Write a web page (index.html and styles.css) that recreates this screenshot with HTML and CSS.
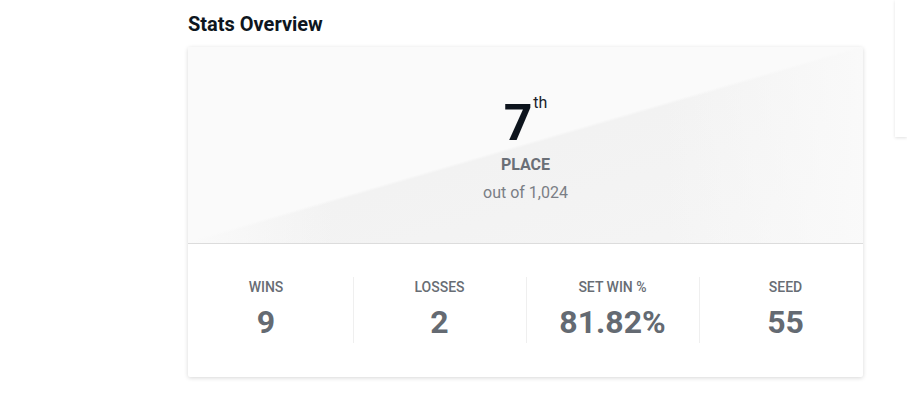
FILE: index.html
```html
<!DOCTYPE html>
<html lang="en">
<head>
<meta charset="utf-8">
<title>Stats Overview</title>
<link rel="stylesheet" href="styles.css">
</head>
<body>
<div class="page">
  <main class="main">
    <h2 class="title">Stats Overview</h2>
    <section class="card">
      <div class="hero">
        <div class="rank"><span class="rank-num">7</span><span class="rank-suffix">th</span></div>
        <div class="rank-label">PLACE</div>
        <div class="rank-total">out of 1,024</div>
      </div>
      <div class="stats">
        <div class="stat">
          <div class="stat-label">WINS</div>
          <div class="stat-value">9</div>
        </div>
        <div class="stat">
          <div class="stat-label">LOSSES</div>
          <div class="stat-value">2</div>
        </div>
        <div class="stat">
          <div class="stat-label">SET WIN %</div>
          <div class="stat-value">81.82%</div>
        </div>
        <div class="stat">
          <div class="stat-label">SEED</div>
          <div class="stat-value">55</div>
        </div>
      </div>
    </section>
  </main>
  <aside class="side">
    <div class="side-card"></div>
  </aside>
</div>
</body>
</html>
```
FILE: styles.css
```css
html, body {
  margin: 0;
  padding: 0;
  background: #ffffff;
}
body {
  font-family: Roboto, "Liberation Sans", Arial, sans-serif;
  overflow: hidden;
}
.page {
  display: flex;
  align-items: flex-start;
  gap: 32px;
  padding-left: 188px;
  width: 907px;
  box-sizing: border-box;
}
.main {
  flex: 0 0 675px;
  padding-top: 12px;
  padding-bottom: 12px;
}
.title {
  margin: 0 0 11px;
  font-size: 20px;
  line-height: 24px;
  font-weight: 700;
  color: #0e1620;
}
.card {
  background: #ffffff;
  border-radius: 2px;
  box-shadow: 0 1px 4px rgba(0, 0, 0, 0.16);
  overflow: hidden;
}
.hero {
  display: flex;
  flex-direction: column;
  align-items: center;
  padding: 51px 0 40px;
  border-bottom: 1px solid #dcdcdc;
  background:
    linear-gradient(to right, rgba(250,250,250,1) 0%, rgba(250,250,250,0) 22%, rgba(250,250,250,0) 70%, rgba(250,250,250,0.9) 100%),
    linear-gradient(to bottom right, #fafafa 0%, #fafafa 49.5%, #f2f2f2 50.3%, #f5f5f5 100%);
}
.rank {
  display: flex;
  align-items: flex-start;
  font-size: 50px;
  line-height: 50px;
  color: #0d141d;
}
.rank-num {
  font-weight: 700;
}
.rank-suffix {
  font-size: 16px;
  line-height: 10px;
  font-weight: 400;
  margin-left: 1px;
  color: #1b222b;
}
.rank-label {
  margin-top: 7px;
  font-size: 16px;
  line-height: 20px;
  font-weight: 700;
  color: #6a6f77;
}
.rank-total {
  margin-top: 8px;
  font-size: 16px;
  line-height: 20px;
  color: #7a7e85;
}
.stats {
  display: grid;
  grid-template-columns: repeat(4, 1fr);
  margin: 0 -8.5px;
  padding: 33px 0 34px;
}
.stat {
  display: flex;
  flex-direction: column;
  align-items: center;
  padding: 2px 0;
}
.stat + .stat {
  border-left: 1px solid #efefef;
}
.stat-label {
  font-size: 14px;
  line-height: 16px;
  font-weight: 500;
  color: #686d74;
}
.stat-value {
  margin-top: 8px;
  font-size: 32px;
  line-height: 38px;
  font-weight: 700;
  color: #646a72;
}
.side {
  flex: 1 1 auto;
  min-width: 0;
}
.side-card {
  height: 137px;
  background: #ffffff;
  box-shadow: 0 1px 3px rgba(0, 0, 0, 0.12);
}
```
